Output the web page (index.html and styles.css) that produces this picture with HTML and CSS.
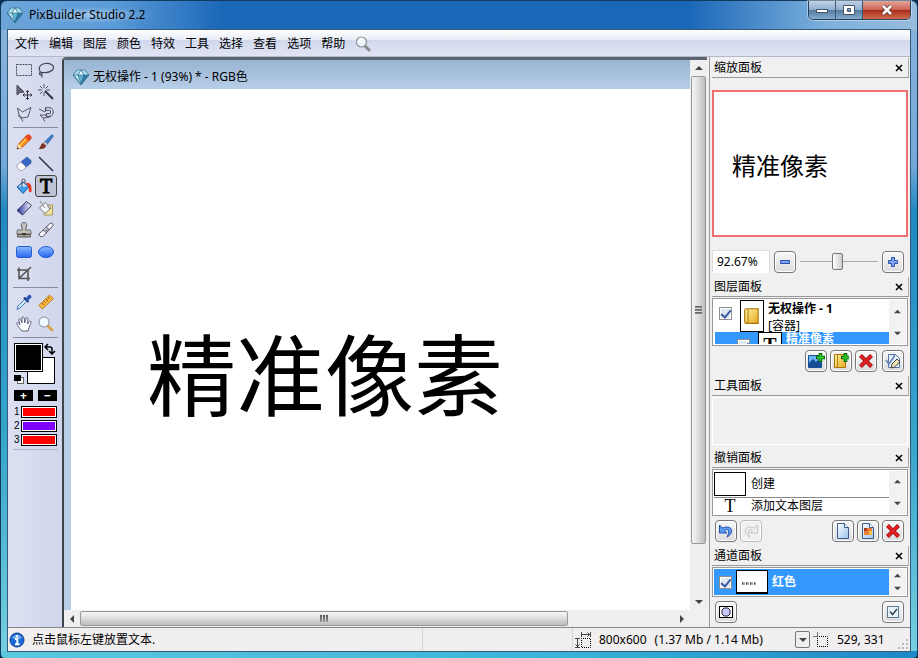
FILE: index.html
```html
<!DOCTYPE html>
<html lang="zh-CN">
<head>
    <meta charset="UTF-8">
    <meta name="viewport" content="width=device-width, initial-scale=1.0">
    <title>PixBuilder Studio 2.2</title>
    <link rel="stylesheet" href="styles.css">
</head>
<body>
<svg class="defs" aria-hidden="true">
    <defs>
        <linearGradient id="blueGrad" x1="0" y1="0" x2="0" y2="1"><stop offset="0" stop-color="#8cbcff"/><stop offset="1" stop-color="#2464f0"/></linearGradient>
        <linearGradient id="inkGrad" x1="0" y1="0" x2="1" y2="0"><stop offset="0" stop-color="#1c2c9c"/><stop offset="1" stop-color="#ffffff"/></linearGradient>
        <linearGradient id="goldGrad" x1="0" y1="0" x2="1" y2="1"><stop offset="0" stop-color="#fff2a0"/><stop offset="1" stop-color="#e8a820"/></linearGradient>
        <linearGradient id="pageGrad" x1="0" y1="0" x2="1" y2="1"><stop offset="0" stop-color="#ffffff"/><stop offset="1" stop-color="#9cc0ec"/></linearGradient>
    </defs>
    <symbol id="gem" viewBox="0 0 16 16">
        <path d="M4 1h8l4 5-8 10L0 6z" fill="#2e7ca4"/>
        <path d="M4 1l-4 5h5l3-5zM12 1l4 5h-5L8 1z" fill="#a8dcec"/>
        <path d="M8 1l3 5H5z" fill="#e6f8fc"/>
        <path d="M5 6h6l-3 9z" fill="#62b4d4"/>
        <path d="M1 6l7 9-3-9z" fill="#c4e8f2"/>
        <path d="M4 1h8l4 5-8 10L0 6zM0 6h16M5 6l3 9 3-9-3-5z" fill="none" stroke="#26617f" stroke-width=".6"/>
    </symbol>
    <symbol id="lens" viewBox="0 0 16 16">
        <path d="M10 10l4 4" stroke="#8a8a8a" stroke-width="3" stroke-linecap="round"/>
        <circle cx="6.5" cy="6" r="5" fill="#eef6fb" stroke="#8d979f" stroke-width="1.2"/>
        <path d="M3.5 6a3 3 0 0 1 3-3" fill="none" stroke="#fff" stroke-width="1.5"/>
    </symbol>
    <symbol id="cross" viewBox="0 0 16 16">
        <path d="M2.5 2.5l11 11M13.5 2.5l-11 11" stroke="#8c1010" stroke-width="4"/>
        <path d="M2.5 2.5l11 11M13.5 2.5l-11 11" stroke="#e02020" stroke-width="2.8"/>
    </symbol>
    <symbol id="book" viewBox="0 0 16 16">
        <path d="M3 1.5h10.500v13H3a1.500 1.500 0 0 1-1.500-1.500V3A1.500 1.500 0 0 1 3 1.500z" fill="url(#goldGrad)" stroke="#a87408"/>
        <path d="M4.500 2v12" stroke="#b8800c"/>
    </symbol>
    <symbol id="page" viewBox="0 0 16 16">
        <path d="M2.500 .5h7l4 4v11h-11z" fill="url(#pageGrad)" stroke="#3c5c8c"/>
        <path d="M9.500 .5v4h4" fill="#fff" stroke="#3c5c8c"/>
    </symbol>
    <symbol id="up" viewBox="0 0 8 8"><path d="M0 6l4-4 4 4z" fill="#444"/></symbol>
    <symbol id="down" viewBox="0 0 8 8"><path d="M0 2l4 4 4-4z" fill="#444"/></symbol>
    <symbol id="close" viewBox="0 0 8 8"><path d="M1 1l6 6M7 1L1 7" stroke="#000" stroke-width="1.6"/></symbol>
</svg>

<div class="window">
    <header class="titlebar">
        <svg class="icon"><use href="#gem"/></svg>
        <h1>PixBuilder Studio 2.2</h1>
        <div class="window-buttons">
            <button type="button" aria-label="最小化"><svg viewBox="0 0 14 12"><rect x="1.500" y="5.500" width="11" height="3" fill="#fff" stroke="#45566b"/></svg></button>
            <button type="button" aria-label="最大化"><svg viewBox="0 0 14 12"><path fill-rule="evenodd" d="M1.500 1.500h11v9h-11zM5.500 4.500v3h3v-3z" fill="#fff" stroke="#45566b"/></svg></button>
            <button type="button" class="close-window" aria-label="关闭"><svg viewBox="0 0 14 12"><path d="M3 2l8 8M11 2l-8 8" stroke="#5c3030" stroke-width="4"/><path d="M3 2l8 8M11 2l-8 8" stroke="#fff" stroke-width="2.500"/></svg></button>
        </div>
    </header>

    <div class="client">
        <nav class="menu">
            <a href="#">文件</a>
            <a href="#">编辑</a>
            <a href="#">图层</a>
            <a href="#">颜色</a>
            <a href="#">特效</a>
            <a href="#">工具</a>
            <a href="#">选择</a>
            <a href="#">查看</a>
            <a href="#">选项</a>
            <a href="#">帮助</a>
            <button type="button" aria-label="搜索"><svg class="icon"><use href="#lens"/></svg></button>
        </nav>

        <div class="workspace">
            <aside class="toolbar">
                <div class="tools">
                    <button type="button" aria-label="矩形选择"><svg viewBox="0 0 16 16"><rect x=".5" y="2.500" width="15" height="11" fill="none" stroke="#445" stroke-dasharray="2 1"/></svg></button>
                    <button type="button" aria-label="套索"><svg viewBox="0 0 16 16"><path d="M2.500 10C0 7 1 2 8 1.500c5-.3 8 2 7.500 4.500S11 11 6 10.500C3 10 1 10.500 1.500 12s3 .5 3-1M2 12c2 1 2.500 2 1.500 3.500" fill="none" stroke="#445" stroke-width="1.200"/></svg></button>
                    <button type="button" aria-label="移动"><svg viewBox="0 0 16 16"><path d="M1 1v10l3-2.500 4-.5z" fill="#667" stroke="#445"/><path d="M11.500 6.500v9M7 11h9M10 8l1.500-1.500L13 8M10 14l1.500 1.500L13 14M8.500 9.500L7 11l1.500 1.500M14.500 9.500L16 11l-1.500 1.500" fill="none" stroke="#334"/></svg></button>
                    <button type="button" aria-label="魔术棒"><svg viewBox="0 0 16 16"><path d="M7 7l8 8" stroke="#334" stroke-width="2"/><path d="M6 0v4M6 8v4M0 6h4M8 6h4M2 2l2.500 2.500M10 2L7.500 4.500M2 10l2.500-2.500" stroke="#556"/></svg></button>
                    <button type="button" aria-label="多边形套索"><svg viewBox="0 0 16 16"><path d="M1.500 2l5 4L15 1.500 12 11l-6 1-3-3zM3 9c-1 2 2 3 3 3M5 12l2 3.500" fill="none" stroke="#556"/></svg></button>
                    <button type="button" aria-label="磁性套索"><svg viewBox="0 0 16 16"><path d="M1 3l6 3 1-2M13 9l-1 2-7 1-3-3zM5 12l2 3.500" fill="none" stroke="#556"/><path d="M7 3h4a3 3 0 0 1 0 6H8" fill="none" stroke="#445" stroke-width="3.400"/><path d="M8 3h3a3 3 0 0 1 0 6H9" fill="none" stroke="#eef" stroke-width="1.400"/></svg></button>
                </div>
                <div class="tools">
                    <button type="button" aria-label="铅笔"><svg viewBox="0 0 16 16"><path d="M1 15l1.500-5 8-8.500 4 4L6 13.500z" fill="#f88820" stroke="#b04010" stroke-width=".7"/><path d="M9 3l2.500-2.500h2l2 2v2L13 7z" fill="#e84820"/><path d="M2.500 10l3.500 3.500L1 15z" fill="#ffe8a0"/><path d="M1 15l.6-2L3 14.400z" fill="#222"/><path d="M4 11.500L10 5" stroke="#ffc850" stroke-width="1.500"/></svg></button>
                    <button type="button" aria-label="画笔"><svg viewBox="0 0 16 16"><path d="M7 7.500l7-7 1.500 1.500-6 8z" fill="#3c80d0" stroke="#28508c" stroke-width=".6"/><path d="M7 7.500L9.500 10 8 12 5 9z" fill="#c8ccd4" stroke="#666" stroke-width=".5"/><path d="M5 9l3 3c-1 3-4 3-7.500 3C3 13 2.500 10 5 9z" fill="#7c3420"/></svg></button>
                    <button type="button" aria-label="橡皮擦"><svg viewBox="0 0 16 16"><path d="M8 3.500L11 1l4 3.500V7l-5 4-5-5z" fill="#3868c8" stroke="#234590" stroke-width=".7"/><path d="M5 6l5 5-3.500 3.500H4L1 11V9z" fill="#fff" stroke="#889" stroke-width=".7"/></svg></button>
                    <button type="button" aria-label="直线"><svg viewBox="0 0 16 16"><path d="M1 1l14 14" stroke="#334" stroke-width="1.600"/></svg></button>
                    <button type="button" aria-label="油漆桶"><svg viewBox="0 0 16 16"><path d="M1 9l6-5 6 5-6 6.500z" fill="#3c9ce8" stroke="#245a98"/><path d="M2.500 8.800L7 5l4 3.500z" fill="#d6eeff"/><path d="M6 9V2.500a1.500 1.500 0 0 1 3 0V5" fill="none" stroke="#445"/><path d="M10 5c5-1 6 3 5.500 9-3 1-3-2-2.500-4z" fill="#e83420"/></svg></button>
                    <button type="button" class="selected" aria-label="文本" aria-pressed="true">T</button>
                    <button type="button" aria-label="渐变"><svg viewBox="0 0 16 16"><path d="M1 10.500L10.500 1.500l5 4-9 9.500z" fill="url(#inkGrad)" stroke="#335"/></svg></button>
                    <button type="button" aria-label="图案填充"><svg viewBox="0 0 16 16"><path d="M8 5h6.500v10H6z" fill="#f4e4a0" stroke="#a89858"/><path d="M1.500 8l5.500-5.500 6 5.500-6 5.500z" fill="#f6f6fa" stroke="#777"/><path d="M2 1l5 7M9 6l3 3" stroke="#888"/></svg></button>
                    <button type="button" aria-label="图章"><svg viewBox="0 0 16 16"><path d="M6.500 8L5.500 4a2.700 2.700 0 1 1 5 0l-1 4H14a1.500 1.500 0 0 1 1 1.500V12H1V9.500A1.500 1.500 0 0 1 2 8z" fill="#c4c0bc" stroke="#666"/><path d="M1.500 12.500h13v2.500h-13z" fill="#aaa6a0" stroke="#555"/><path d="M5.500 11h5L8 14z" fill="#333"/></svg></button>
                    <button type="button" aria-label="修复"><svg viewBox="0 0 16 16"><path d="M1 12L12 1.500q3-1.500 3 2L5 14.500q-4 1-4-2.500z" fill="#f4f4f8" stroke="#556"/><path d="M5 8l4 3M8 5l4 3" stroke="#556"/><path d="M6 9l3-3 2 1.500L8.500 10z" fill="#99a"/></svg></button>
                    <button type="button" aria-label="矩形"><svg viewBox="0 0 16 16"><rect x=".5" y="2.500" width="15" height="11" rx="2" fill="url(#blueGrad)" stroke="#245cd0"/></svg></button>
                    <button type="button" aria-label="椭圆"><svg viewBox="0 0 16 16"><ellipse cx="8" cy="8" rx="7.500" ry="5.500" fill="url(#blueGrad)" stroke="#245cd0"/></svg></button>
                    <button type="button" aria-label="裁剪"><svg viewBox="0 0 16 16"><path d="M3 1.500v11h11M1 4h11v11M3.500 12L15 1" fill="none" stroke="#555" stroke-width="1.600"/></svg></button>
                </div>
                <div class="tools">
                    <button type="button" aria-label="吸管"><svg viewBox="0 0 16 16"><path d="M9 5l2 2-7 7-3 1.500L2 12z" fill="#d4ecff" stroke="#4676b0"/><path d="M8 3.500l4.500 4.500" stroke="#1c3c84" stroke-width="2.200"/><path d="M9.500 5L12 1.500q2-1.500 3 0t0 2.500L11.500 7z" fill="#2856b0"/></svg></button>
                    <button type="button" aria-label="标尺"><svg viewBox="0 0 16 16"><path d="M.7 11.500L11.500 1l4 3.500L4.500 15z" fill="#f8b440" stroke="#b4741c" stroke-width=".8"/><path d="M4 9l2 2M6 7l1.500 1.500M8 5l2 2M10 3l1.500 1.500" stroke="#805010"/></svg></button>
                    <button type="button" aria-label="抓手"><svg viewBox="0 0 16 16"><path d="M5 14C3.500 12 1 9 .8 7.500s1.500-1.200 2 0L4 9 2.800 4c-.3-1.700 1.500-2 2-.5L6 7V2c0-1.600 2-1.600 2.200 0L8.700 7l1.200-4.500c.5-1.500 2.200-1 2 .6L11.500 8l1.700-2.500c.8-1.300 2.300-.3 1.800 1L13 11.500 12 15H6z" fill="#fff" stroke="#446" stroke-width=".8"/></svg></button>
                    <button type="button" aria-label="缩放"><svg viewBox="0 0 16 16"><path d="M10 10l4 4" stroke="#d4a450" stroke-width="3" stroke-linecap="round"/><circle cx="6" cy="6" r="5" fill="#eef8ff" stroke="#8490a0"/></svg></button>
                </div>
                <div class="colors">
                    <svg viewBox="0 0 42 42" role="img" aria-label="前景色和背景色">
                        <rect x="13.500" y="14.500" width="27" height="26" fill="#fff" stroke="#000"/>
                        <rect x=".5" y=".5" width="28" height="28" fill="#fff" stroke="#000"/>
                        <rect x="2" y="2" width="25" height="25" fill="#000"/>
                        <path d="M32 4h4q2 0 2 2v4M34 1l-3 3 3 3M35 8l3 3 3-3" fill="none" stroke="#000" stroke-width="1.500"/>
                        <rect x="3.500" y="34.500" width="6" height="6" fill="#fff" stroke="#666"/><rect x="0" y="32" width="7" height="6" fill="#000"/>
                    </svg>
                    <div class="plus-minus">
                        <button type="button" aria-label="添加颜色">+</button>
                        <button type="button" aria-label="移除颜色">−</button>
                    </div>
                    <ol class="swatches">
                        <li>1<button type="button" class="red" aria-label="颜色 1"></button></li>
                        <li>2<button type="button" class="violet" aria-label="颜色 2"></button></li>
                        <li>3<button type="button" class="red" aria-label="颜色 3"></button></li>
                    </ol>
                </div>
            </aside>

            <main class="document">
                <section class="sheet">
                    <h2><svg class="icon"><use href="#gem"/></svg>无权操作 - 1 (93%) * - RGB色</h2>
                    <div class="canvas">精准像素</div>
                </section>
                <div class="scroll vertical">
                    <svg><use href="#up"/></svg>
                    <div class="thumb"><i></i><i></i><i></i></div>
                    <svg><use href="#down"/></svg>
                </div>
                <div class="scroll horizontal">
                    <svg class="turn"><use href="#up"/></svg>
                    <div class="thumb"><i></i><i></i><i></i></div>
                    <svg class="turn"><use href="#down"/></svg>
                </div>
            </main>

            <aside class="panels">
                <section class="panel">
                    <h3>缩放面板<button type="button" aria-label="关闭缩放面板"><svg><use href="#close"/></svg></button></h3>
                    <div class="preview">精准像素</div>
                    <div class="zoom-row">
                        <input type="text" value="92.67%" aria-label="缩放比例">
                        <button type="button" class="tile" aria-label="缩小"><svg viewBox="0 0 16 16"><path d="M3.500 6.500h9v3h-9z" fill="#7ca4f0" stroke="#2c50b0"/></svg></button>
                        <input type="range" min="0" max="100" value="48" aria-label="缩放">
                        <button type="button" class="tile" aria-label="放大"><svg viewBox="0 0 16 16"><path d="M6.500 3.500h3v3h3v3h-3v3h-3v-3h-3v-3h3z" fill="#7ca4f0" stroke="#2c50b0"/></svg></button>
                    </div>
                </section>

                <section class="panel">
                    <h3>图层面板<button type="button" aria-label="关闭图层面板"><svg><use href="#close"/></svg></button></h3>
                    <div class="list layers">
                        <div class="rows">
                            <div class="row container-layer">
                                <input type="checkbox" id="layer1" checked>
                                <span class="thumbnail"><svg class="book"><use href="#book"/></svg></span>
                                <label for="layer1"><b>无权操作 - 1</b><br>[容器]</label>
                            </div>
                            <div class="row child-layer">
                                <input type="checkbox" id="layer2" checked>
                                <span class="thumbnail letter">T</span>
                                <label for="layer2">精准像素</label>
                            </div>
                        </div>
                        <div class="mini-scroll"><svg><use href="#up"/></svg><svg><use href="#down"/></svg></div>
                    </div>
                    <div class="actions">
                        <button type="button" class="tile push" aria-label="新建图层"><svg viewBox="0 0 16 16"><path d="M.5 2.500h13v12H.5z" fill="#68b4f4" stroke="#1c4c94"/><path d="M1 10l4-4 3 3 2-2 3 3v4H1z" fill="#184c94"/><path d="M12.500 0v9M8 4.500h9" stroke="#086008" stroke-width="3.600"/><path d="M12.500 1v7M9 4.500h7" stroke="#28cc28" stroke-width="1.800"/></svg></button>
                        <button type="button" class="tile" aria-label="新建容器"><svg viewBox="0 0 16 16"><path d="M1.500 1.500h11v13h-11z" fill="url(#goldGrad)" stroke="#a87408"/><path d="M4.500 2v12" stroke="#b8800c"/><path d="M12.500 0v9M8 4.500h8" stroke="#086008" stroke-width="3.600"/><path d="M12.500 1v7M9 4.500h7" stroke="#28cc28" stroke-width="1.800"/></svg></button>
                        <button type="button" class="tile" aria-label="删除图层"><svg><use href="#cross"/></svg></button>
                        <button type="button" class="tile" aria-label="图层属性"><svg viewBox="0 0 16 16"><path d="M3.500 1.500h7l4 4v9h-11z" fill="#e8f0fc" stroke="#5874a0"/><path d="M1 7l3 4 6-9" fill="none" stroke="#6884b8" stroke-width="1.600"/><path d="M6 15l1-4 5-5 3 3-5.500 5z" fill="#f0e0b8" stroke="#444"/></svg></button>
                    </div>
                </section>

                <section class="panel">
                    <h3>工具面板<button type="button" aria-label="关闭工具面板"><svg><use href="#close"/></svg></button></h3>
                    <div class="empty"></div>
                </section>

                <section class="panel">
                    <h3>撤销面板<button type="button" aria-label="关闭撤销面板"><svg><use href="#close"/></svg></button></h3>
                    <div class="list history">
                        <div class="rows">
                            <div class="row first"><span class="thumbnail"></span>创建</div>
                            <div class="row"><span class="step-icon">T</span>添加文本图层</div>
                        </div>
                        <div class="mini-scroll"><svg><use href="#up"/></svg><svg><use href="#down"/></svg></div>
                    </div>
                    <div class="actions">
                        <button type="button" class="tile" aria-label="撤销"><svg viewBox="0 0 16 16"><path d="M1.500 2v8H9L6.500 7.500C10 5 12.500 8 9 14 16 11 15.500 1 4.500 5z" fill="#5a9cf0" stroke="#2450a8"/></svg></button>
                        <button type="button" class="tile" aria-label="重做" disabled><svg viewBox="0 0 16 16"><path d="M14.500 2v8H7l2.500-2.500C6 5 3.500 8 7 14 0 11 .5 1 11.500 5z" fill="#eee" stroke="#c4c4c4"/></svg></button>
                        <button type="button" class="tile push" aria-label="新建文档"><svg><use href="#page"/></svg></button>
                        <button type="button" class="tile" aria-label="快照"><svg viewBox="0 0 16 16"><use href="#page" width="16" height="16"/><path d="M4 5h8v7H4z" fill="#e8803c"/><path d="M4 5h3v3H4z" fill="#a83820"/><path d="M9 8h3v4H9z" fill="#f8c040"/></svg></button>
                        <button type="button" class="tile" aria-label="清除历史"><svg><use href="#cross"/></svg></button>
                    </div>
                </section>

                <section class="panel">
                    <h3>通道面板<button type="button" aria-label="关闭通道面板"><svg><use href="#close"/></svg></button></h3>
                    <div class="list channels">
                        <div class="rows">
                            <div class="row">
                                <input type="checkbox" id="channel1" checked>
                                <span class="thumbnail"><svg viewBox="0 0 30 22"><path d="M5 12.500h3M9 12.500h3M13 12.500h3M17 12.500h2" stroke="#444" stroke-width="2.500" stroke-dasharray="1 .5"/></svg></span>
                                <label for="channel1">红色</label>
                            </div>
                        </div>
                        <div class="mini-scroll"><svg><use href="#up"/></svg><svg><use href="#down"/></svg></div>
                    </div>
                    <div class="actions">
                        <button type="button" class="tile" aria-label="蒙版"><svg viewBox="0 0 16 16"><rect x="1.500" y="2.500" width="13" height="11" fill="#fff" stroke="#000"/><path d="M6 4h4l2 2v4l-2 2H6l-2-2V6z" fill="#c8c8fc" stroke="#223"/></svg></button>
                        <button type="button" class="tile push" aria-label="全部通道"><svg viewBox="0 0 16 16"><rect x="2.500" y="2.500" width="11" height="11" fill="#e8f2f8" stroke="#5c7c94"/><path d="M5 7.500l2.500 3L12 5" fill="none" stroke="#345" stroke-width="1.500"/></svg></button>
                    </div>
                </section>
            </aside>
        </div>

        <footer class="statusbar">
            <div class="hint">
                <svg class="icon" viewBox="0 0 16 16"><circle cx="8" cy="8" r="7" fill="#1c68d4" stroke="#0c3c94"/><path d="M3 6a5.500 5 0 0 1 10 0q-5 2-10 0z" fill="#78b0f4"/><path d="M8 3v2.200M6 7h2.300v5M6 12.200h4.500" fill="none" stroke="#fff" stroke-width="1.900"/></svg>
                点击鼠标左键放置文本.
            </div>
            <div class="blank"></div>
            <div class="size">
                <svg class="icon" viewBox="0 0 16 16"><path d="M6.500 6.500h9v9h-9z" fill="none" stroke="#000" stroke-dasharray="1 1" stroke-dashoffset=".5"/><path d="M7 2.500h8M12.500 .5l2 2-2 2M6.500 0v5M15.500 0v5M2.500 7v8M.5 12.500l2 2 2-2M0 6.500h5M0 15.500h5" fill="none" stroke="#444"/></svg>
                <span>800x600</span><span>(1.37 Mb / 1.14 Mb)</span>
                <button type="button" aria-label="单位"><svg><use href="#down"/></svg></button>
            </div>
            <div class="position">
                <svg class="icon" viewBox="0 0 16 16"><path d="M4.500 4.500h10v10h-10z" fill="none" stroke="#000" stroke-dasharray="1 1" stroke-dashoffset=".5"/><path d="M4.500 0v4M0 4.500h4" stroke="#777"/></svg>
                529, 331
            </div>
            <svg class="grip" viewBox="0 0 10 10"><path d="M8 0h2v2H8zM4 4h2v2H4zM8 4h2v2H8zM0 8h2v2H0zM4 8h2v2H4zM8 8h2v2H8z" fill="#bbb"/></svg>
        </footer>
    </div>
</div>
</body>
</html>
```

FILE: styles.css
```css
* {
    box-sizing: border-box;
}
body {
    margin: 0;
    font-family: "Noto Sans", "Noto Sans CJK SC", sans-serif;
    font-size: 12px;
    line-height: 16px;
    color: #000;
    background: #0b2c50;
}
button, input {
    font: inherit;
    color: inherit;
    margin: 0;
    padding: 0;
}
button {
    border: none;
    background: none;
    display: flex;
    align-items: center;
    justify-content: center;
}
h1, h2, h3 {
    margin: 0;
    font-size: 12px;
    font-weight: normal;
}
a {
    color: inherit;
    text-decoration: none;
}
.defs {
    position: absolute;
    width: 0;
    height: 0;
}
.icon {
    width: 16px;
    height: 16px;
    flex: none;
}

/* window frame */
.window {
    min-height: 100vh;
    display: flex;
    flex-direction: column;
    padding: 0 6px 6px;
    border: 1px solid #123a5e;
    border-radius: 7px 7px 5px 5px;
    background:
        linear-gradient(90deg, #5cc8dc, #3cb4d8 60%, #1c88c4) bottom / 100% 7px no-repeat,
        linear-gradient(90deg, #6ca4d8 0, #5c9cd8 12%, #1c68b8 24%, #1a66b8 75%, #7cb0dc 90%, #98bcdc) top / 100% 29px no-repeat,
        linear-gradient(#8cb4dc, #74a8d8 25%, #2088c0 32%, #3ca8cc 70%, #78d0e0);
}
.titlebar {
    height: 28px;
    display: flex;
    align-items: center;
    gap: 6px;
}
.titlebar h1 {
    padding-right: 10px;
    background: radial-gradient(closest-side, rgba(255, 255, 255, 0.4), transparent);
}
.window-buttons {
    display: flex;
    align-self: flex-start;
    margin-left: auto;
    height: 19px;
    border: 1px solid #26415e;
    border-top: none;
    border-radius: 0 0 5px 5px;
    overflow: hidden;
    box-shadow: 0 0 0 1px rgba(255, 255, 255, 0.4);
}
.window-buttons button {
    width: 27px;
    border-right: 1px solid #39587c;
    background: linear-gradient(#c0d2e6, #92b0ce 48%, #54799f 50%, #84abcd);
}
.window-buttons .close-window {
    width: 47px;
    border-right: none;
    background: linear-gradient(#e4a498, #cc6454 48%, #a82c18 50%, #d06c50);
}
.window-buttons svg {
    width: 14px;
    height: 12px;
}
.client {
    flex: 1;
    display: flex;
    flex-direction: column;
    border: 1px solid #345a7c;
    background: #f0f0f0;
}

/* menu */
.menu {
    height: 27px;
    display: flex;
    align-items: center;
    gap: 10px;
    padding: 2px 7px 0;
    border-bottom: 1px solid #b4b8c8;
    background: linear-gradient(#fff, #e8ecf6 38%, #d2d8ec 40%, #e0e4f4);
}

/* toolbar */
.workspace {
    flex: 1;
    display: flex;
}
.toolbar {
    width: 54px;
    padding: 2px 4px 2px 5px;
    background: linear-gradient(90deg, #dce0f2, #d0d6ec);
}
.tools {
    display: grid;
    grid-template-columns: 22px 22px;
    grid-auto-rows: 22px;
    padding-bottom: 2px;
    margin-bottom: 3px;
    border-bottom: 1px solid #888ca0;
}
.tools svg {
    width: 16px;
    height: 16px;
}
.tools .selected {
    border: 1px solid #444;
    border-radius: 3px;
    background: #c0c4d4;
    font: 20px/18px "Liberation Serif", serif;
    -webkit-text-stroke: 1px #000;
}
.colors {
    padding: 2px 0 2px 1px;
    border-bottom: 1px solid #b0b4c8;
}
.colors > svg {
    display: block;
    width: 42px;
    height: 42px;
}
.plus-minus {
    display: flex;
    gap: 5px;
    margin: 5px 0 4px;
}
.plus-minus button {
    width: 19px;
    height: 11px;
    background: #000;
    color: #fff;
    font-weight: bold;
    line-height: 11px;
}
.swatches {
    list-style: none;
    margin: 0;
    padding: 0;
    font: 10px/14px "Liberation Sans", sans-serif;
}
.swatches li {
    display: flex;
    align-items: center;
    gap: 1px;
    height: 14px;
}
.swatches button {
    width: 36px;
    height: 12px;
    border: 1px solid #000;
    box-shadow: inset 0 0 0 1px #fff;
}
.red {
    background: #f00;
}
.violet {
    background: #8000ff;
}

/* document */
.document {
    flex: 1;
    min-width: 0;
    display: grid;
    grid-template-columns: 1fr 17px;
    grid-template-rows: 1fr 17px;
    border-top: 3px solid #5c6470;
    border-left: 2px solid #404448;
    border-top-left-radius: 4px;
}
.sheet {
    display: flex;
    flex-direction: column;
    padding-left: 7px;
    background: linear-gradient(#98b4d2, #b8cfe8 30px);
}
.sheet h2 {
    height: 29px;
    display: flex;
    align-items: center;
    gap: 4px;
    padding: 5px 2px 0;
}
.canvas {
    flex: 1;
    padding: 218px 0 0 76px;
    background: #fff;
    font: 89px/128px "Noto Sans CJK SC", sans-serif;
    white-space: nowrap;
}
.scroll {
    display: flex;
    align-items: center;
    background: #efefef;
}
.scroll svg {
    flex: none;
    width: 8px;
    height: 8px;
    margin: 4px;
}
.vertical {
    flex-direction: column;
}
.horizontal {
    grid-column: 1;
}
.thumb {
    display: flex;
    align-items: center;
    justify-content: center;
    gap: 1px;
    border: 1px solid #989898;
    border-radius: 2px;
}
.vertical .thumb {
    flex: 0 1 85%;
    margin-bottom: auto;
    width: 15px;
    flex-direction: column;
    background: linear-gradient(90deg, #f4f4f4, #e0e0e0 45%, #bcbcbc);
}
.horizontal .thumb {
    flex: 0 1 78%;
    margin-right: auto;
    height: 15px;
    background: linear-gradient(#f4f4f4, #e0e0e0 45%, #bcbcbc);
}
.thumb i {
    background: linear-gradient(#555, #999);
}
.vertical i {
    width: 7px;
    height: 2px;
}
.horizontal i {
    width: 2px;
    height: 7px;
}
.turn {
    transform: rotate(-90deg);
}

/* side panels */
.panels {
    width: 201px;
    margin-left: 2px;
    padding: 1px 1px 0 2px;
    border-left: 1px solid #999;
}
.panel h3 {
    height: 20px;
    display: flex;
    align-items: center;
    justify-content: space-between;
    padding: 0 5px 0 2px;
    border-right: 1px solid #aaa;
    border-bottom: 1px solid #999;
}
.panel h3 svg {
    display: block;
    width: 8px;
    height: 8px;
}
.preview {
    height: 147px;
    margin: 12px 1px 13px 0;
    padding: 56px 18px 0;
    border: 2px solid #f07070;
    background: #fff;
    font: 24px/34px "Noto Sans CJK SC", sans-serif;
}
.zoom-row {
    display: flex;
    align-items: center;
    justify-content: space-between;
    padding: 0 5px 4px 0;
}
.zoom-row input[type="text"] {
    width: 58px;
    height: 23px;
    padding: 0 4px;
    border: 1px solid #ddd;
    border-bottom-color: #fff;
    background: #fff;
}
.zoom-row input[type="range"] {
    appearance: none;
    width: 78px;
    height: 18px;
    background: linear-gradient(#aaa, #aaa) center / 100% 1px no-repeat;
    border-radius: 0;
}
.zoom-row input[type="range"]::-webkit-slider-thumb {
    appearance: none;
    width: 11px;
    height: 17px;
    border: 1px solid #777;
    border-radius: 2px;
    background: linear-gradient(90deg, #fff, #ccc);
}
.tile {
    width: 22px;
    height: 22px;
    border: 1px solid #777;
    border-radius: 4px;
    background: linear-gradient(#f8f8f8, #dcdce0);
    box-shadow: inset 0 0 0 1px #fff;
}
.tile:disabled {
    border-color: #bbb;
    background: #f0f0f0;
}
.tile svg {
    width: 16px;
    height: 16px;
    overflow: visible;
}
.list {
    display: flex;
    margin: 1px 1px 4px 0;
    padding: 1px;
    border: 1px solid #999;
    background: #fff;
    overflow: hidden;
}
.rows {
    flex: 1;
    overflow: hidden;
}
.row {
    display: flex;
    align-items: center;
}
.layers {
    height: 48px;
}
.history {
    height: 47px;
}
.channels {
    height: 30px;
}
.mini-scroll {
    width: 17px;
    display: flex;
    flex-direction: column;
    align-items: center;
    justify-content: space-around;
    background: #f2f2f2;
}
.mini-scroll svg {
    width: 7px;
    height: 7px;
}
input[type="checkbox"] {
    appearance: none;
    flex: none;
    width: 13px;
    height: 13px;
    border: 1px solid #8e8f8f;
    background: #e0e8f0;
    box-shadow: inset 0 0 0 1px #fff;
    display: grid;
    place-items: center;
}
input[type="checkbox"]:checked::before {
    content: "";
    width: 4px;
    height: 8px;
    border: solid #3c5ca4;
    border-width: 0 2px 2px 0;
    transform: rotate(40deg);
}
.thumbnail {
    flex: none;
    display: flex;
    align-items: center;
    justify-content: center;
    width: 32px;
    height: 24px;
    border: 1px solid #000;
    background: #fff;
}
.container-layer {
    height: 32px;
    padding-left: 5px;
    gap: 8px;
}
.container-layer input {
    margin-bottom: 6px;
}
.container-layer .thumbnail {
    width: 24px;
    height: 32px;
}
.container-layer label {
    margin-left: -4px;
    line-height: 17px;
    padding-top: 1px;
}
.book {
    width: 18px;
    height: 18px;
}
.child-layer {
    height: 32px;
    align-items: flex-start;
    margin-left: 1px;
    padding-left: 22px;
    gap: 8px;
    background: #3399ff;
    color: #fff;
    font-weight: bold;
}
.child-layer input {
    margin-top: 7px;
}
.child-layer label {
    margin-left: -4px;
    line-height: 14px;
}
.letter {
    width: 24px;
    height: 32px;
    align-items: flex-start;
    color: #000;
    font: bold 20px/24px "Liberation Serif", serif;
}
.actions {
    display: flex;
    gap: 3px;
    padding: 0 5px 4px 3px;
}
.push {
    margin-left: auto;
}
.layers + .actions .tile:last-child {
    margin-left: 2px;
}
.empty {
    height: 48px;
    margin: 1px 1px 3px 0;
    border: 1px solid #fff;
}
.history .row {
    gap: 5px;
    height: 16px;
}
.history .first {
    height: 27px;
    border-bottom: 1px solid #888;
}
.step-icon {
    width: 32px;
    text-align: center;
    font: 18px/16px "Liberation Serif", serif;
}
.channels .row {
    height: 26px;
    padding-left: 5px;
    gap: 4px;
    background: #3399ff;
    color: #fff;
    font-weight: bold;
}
.channels .thumbnail {
    border-bottom-width: 2px;
}

/* status bar */
.statusbar {
    display: flex;
    align-items: stretch;
    height: 24px;
    border-top: 1px solid #888;
    background: #f0eeee;
}
.statusbar > div {
    display: flex;
    align-items: center;
    border-right: 1px solid #d4d4d4;
}
.statusbar .hint {
    flex: 1 1 412px;
    gap: 7px;
    padding-left: 1px;
}
.statusbar .blank {
    flex: 0 1 150px;
}
.statusbar .size {
    flex: none;
    width: 237px;
    gap: 8px;
    padding-left: 2px;
    border: none;
}
.size button {
    width: 15px;
    height: 17px;
    margin-left: auto;
    border: 1px solid #777;
    border-radius: 2px;
}
.size button svg {
    width: 8px;
    height: 8px;
}
.statusbar .position {
    gap: 8px;
    width: 88px;
    padding-left: 3px;
    border: none;
}
.grip {
    width: 10px;
    height: 10px;
    margin: auto 2px 2px 0;
}
```
